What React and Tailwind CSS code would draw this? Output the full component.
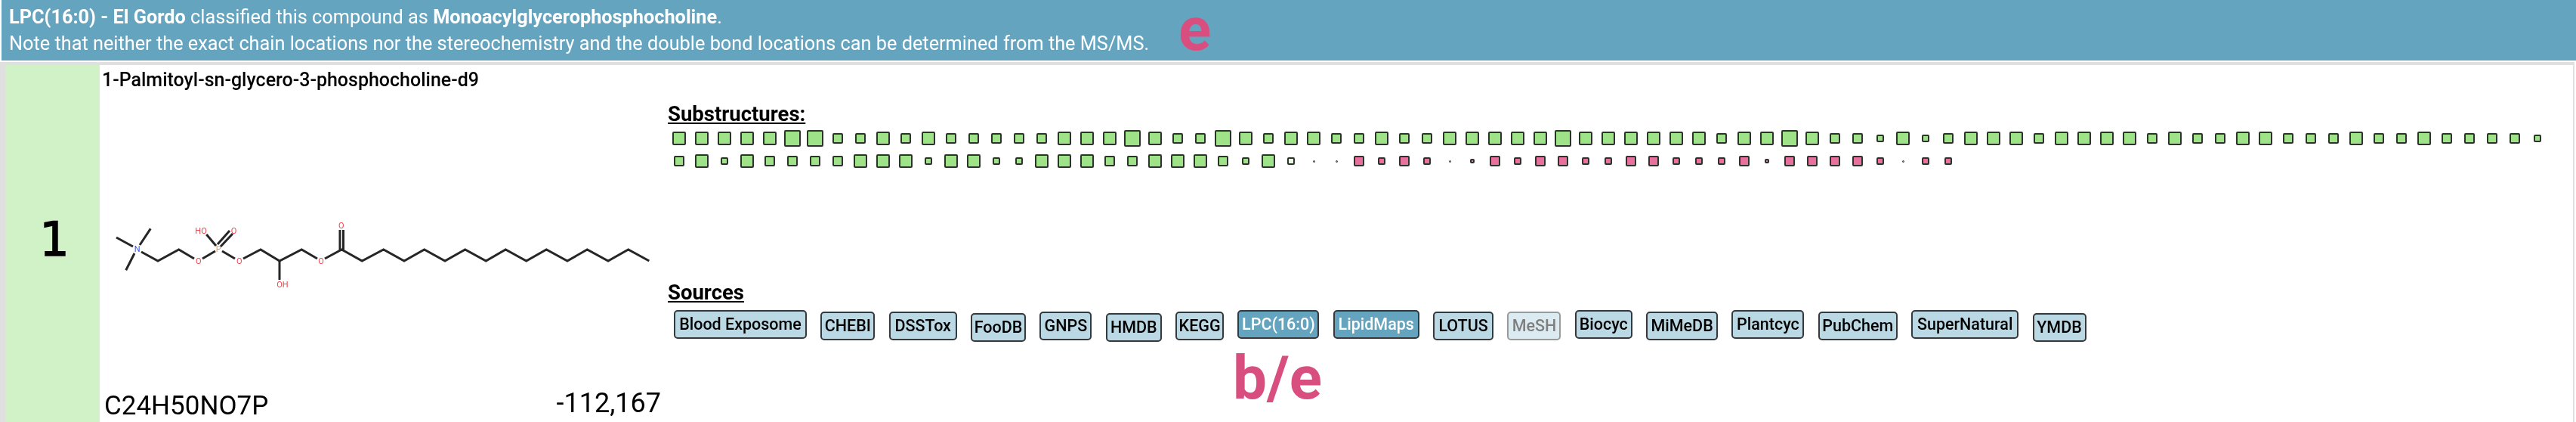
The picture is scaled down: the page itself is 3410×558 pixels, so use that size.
import React from "react";

const SIZES = {
  L: "w-[22px] h-[22px] border-[2px]",
  M: "w-[18px] h-[18px] border-[2px]",
  S: "w-[14px] h-[14px] border-[2px]",
  X: "w-[10px] h-[10px] border-[2px]",
  t: "w-[6px] h-[6px] border-[2px]",
  d: "w-[3px] h-[3px] border-[1px]",
};

const ROW_ONE =
  "MMMMMLLSSMSMSSSSSMMMLMSSLMSMM" + "SSMSSMMMMMLMMMMMMSMMLMSSXMX" + "SMMMSMMMMSMSSMMSSSMSSMSSSSX";
const ROW_TWO_GREEN = "SMXMSSSSMMMXMMXXMMMSSMMMSXM";
const ROW_TWO_PINK = "SXSXdtSXSSXXSSXXXStSSSSXdXX";

const SOURCES = [
  { name: "Blood Exposome", width: "w-[176px]", top: "mt-0" },
  { name: "CHEBI", width: "w-[72px]", top: "mt-[2px]" },
  { name: "DSSTox", width: "w-[90px]", top: "mt-[2px]" },
  { name: "FooDB", width: "w-[73px]", top: "mt-[4px]" },
  { name: "GNPS", width: "w-[69px]", top: "mt-[2px]" },
  { name: "HMDB", width: "w-[74px]", top: "mt-[4px]" },
  { name: "KEGG", width: "w-[64px]", top: "mt-[2px]" },
  { name: "LPC(16:0)", width: "w-[108px]", top: "mt-0", active: true },
  { name: "LipidMaps", width: "w-[114px]", top: "mt-0", active: true },
  { name: "LOTUS", width: "w-[80px]", top: "mt-[2px]" },
  { name: "MeSH", width: "w-[71px]", top: "mt-[2px]", faded: true },
  { name: "Biocyc", width: "w-[76px]", top: "mt-0" },
  { name: "MiMeDB", width: "w-[95px]", top: "mt-[2px]" },
  { name: "Plantcyc", width: "w-[96px]", top: "mt-0" },
  { name: "PubChem", width: "w-[105px]", top: "mt-[2px]" },
  { name: "SuperNatural", width: "w-[142px]", top: "mt-0" },
  { name: "YMDB", width: "w-[71px]", top: "mt-[4px]" },
];

const Square = ({ size, fill }) => (
  <div className="w-[30px] flex items-center justify-center">
    <div className={`${SIZES[size]} ${fill} border-[#2c332b] rounded-[2px] box-border`} />
  </div>
);

const Molecule = () => (
  <svg className="block" width="752" height="100" viewBox="132 290 752 100">
    <g fill="none" stroke="#262626" strokeWidth="3">
      <path d="M154 314L176 326M199.3 302.3L185 324M166.7 357.3L178 335" />
      <path d="M187 333L209 345L236.7 330L257 342" />
      <path d="M268 342L285 332" />
      <path d="M294 332L311 342" />
      <path d="M322 342L345 330L370 345L399.3 330L420 342" />
      <path d="M430 342L452.3 330L479.3 345L507.7 330L535 345L561.7 330L589 345L615.7 330L643.3 345L669.3 330L696.7 345L723.3 330L751 345L777.3 330L805 345L831.7 330L859.3 345" />
      <path d="M370 345V370" />
      <path d="M286 325L273.3 310" />
      <path d="M288 323L304 305M292 326L308 309" />
      <path d="M450 330V304M454.5 330V304" />
    </g>
    <g fontFamily="Roboto, sans-serif" fontSize="11" textAnchor="middle" fill="#f0484f">
      <text x="262.7" y="349">O</text>
      <text x="316.7" y="349">O</text>
      <text x="425" y="349">O</text>
      <text x="374" y="380">OH</text>
      <text x="266" y="309">HO</text>
      <text x="309.5" y="309">O</text>
      <text x="451.7" y="302">O</text>
      <text x="289.3" y="333" fill="#f0a040">P</text>
      <text x="181.7" y="333" fill="#3f55f0">N</text>
    </g>
  </svg>
);

const App = () => {
  return (
    <div className="relative w-[3410px] h-[558px] bg-white overflow-hidden font-['Roboto',sans-serif] blur-[0.5px]">
      <div className="ml-[2px] h-[80px] bg-[#65a4bf] text-white text-[25.3px] leading-[35px] pl-[10px] pt-[5px]">
        <div>
          <span className="font-bold">LPC(16:0) - El Gordo</span> classified this compound as{" "}
          <span className="font-bold">Monoacylglycerophosphocholine</span>.
        </div>
        <div>
          Note that neither the exact chain locations nor the stereochemistry and the double bond locations can be
          determined from the MS/MS.
        </div>
      </div>

      <div className="mt-[2px] h-[472px] border-[#e0e0e0] border-t-[4px] border-b-[2px] border-l-[7px] border-r-[2px] box-content w-[3399px] flex">
        <div className="w-[125px] bg-[#d0f2c6] flex items-center justify-center pb-[12px] pl-[5px]">
          <span className="font-['DejaVu_Sans',sans-serif] text-[62px] text-black [-webkit-text-stroke:1.5px_black]">1</span>
        </div>

        <div className="w-[752px] flex flex-col pl-[3px]">
          <div className="text-[25px] leading-[32px] font-medium text-black mt-[4px]">
            1-Palmitoyl-sn-glycero-3-phosphocholine-d9
          </div>
          <div className="mt-[168px] -ml-[3px]">
            <Molecule />
          </div>
          <div className="mt-auto flex justify-between items-start text-[35px] leading-[40px] text-black pl-[3px] pr-[9px] mb-[1px]">
            <span>C24H50NO7P</span>
            <span className="-mt-[4px] text-[36px]">-112,167</span>
          </div>
        </div>

        <div className="flex-1 pt-[51px]">
          <div className="text-[27.5px] leading-[27px] font-bold underline text-black">Substructures:</div>
          <div className="flex items-center h-[22px] mt-[8px]">
            {ROW_ONE.split("").map((size, i) => (
              <Square key={i} size={size} fill="bg-[#9fe388]" />
            ))}
          </div>
          <div className="flex items-center h-[22px] mt-[8px]">
            {ROW_TWO_GREEN.split("").map((size, i) => (
              <Square key={i} size={size} fill="bg-[#9fe388]" />
            ))}
            <Square size="X" fill="bg-[#eafbe4]" />
            <Square size="d" fill="bg-[#888888]" />
            <Square size="d" fill="bg-[#888888]" />
            {ROW_TWO_PINK.split("").map((size, i) => (
              <Square key={i} size={size} fill="bg-[#e8709e]" />
            ))}
          </div>

          <div className="mt-[149px] text-[27.5px] leading-[27px] font-bold underline text-black">Sources</div>
          <div className="flex items-start gap-[18.35px] mt-[10px] pl-[8px]">
            {SOURCES.map((s) => (
              <div
                key={s.name}
                className={`${s.width} ${s.top} h-[38px] rounded-[5px] border-[2px] flex items-center justify-center text-[21.5px] font-medium whitespace-nowrap ${
                  s.active ? "bg-[#65a4bf] text-white border-[#33393c]" : "bg-[#bbd8e5] text-black border-[#33393c]"
                } ${s.faded ? "opacity-50" : ""}`}
              >
                {s.name}
              </div>
            ))}
          </div>
        </div>
      </div>

      <div className="absolute left-[1560px] top-0 text-[80px] leading-[78px] font-bold text-[#d84f7f]">e</div>
      <div className="absolute left-[1632px] top-[453px] text-[80px] leading-[94px] font-bold text-[#d84f7f]">b/e</div>
    </div>
  );
};

export default App;
